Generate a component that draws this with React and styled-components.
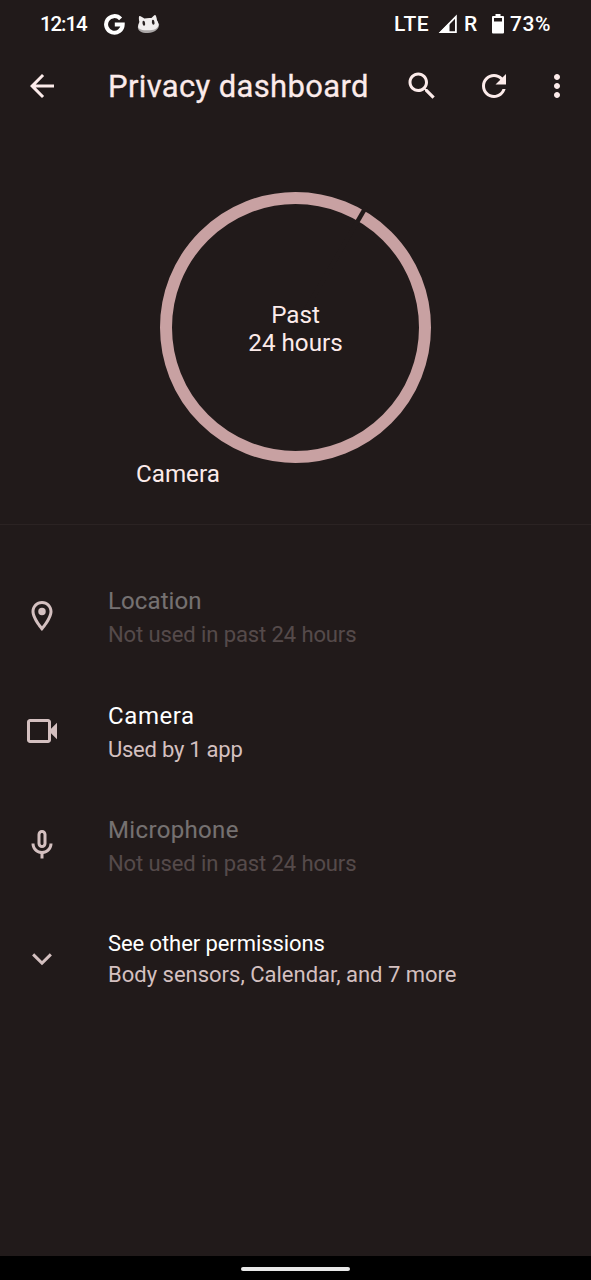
import styled, { createGlobalStyle } from "styled-components";

const colors = {
    background: "#211a1a",
    primaryText: "#fcebea",
    secondaryText: "#d4c0c0",
    ring: "#c8a1a2",
    divider: "#2b2323",
};

// The permission groups listed under the usage chart
const permissions = [
    { name: "Location", summary: "Not used in past 24 hours", icon: "location", used: false, spacing: "0.1px", summarySpacing: "-0.1px" },
    { name: "Camera", summary: "Used by 1 app", icon: "camera", used: true, spacing: "0.6px", summarySpacing: "-0.25px" },
    { name: "Microphone", summary: "Not used in past 24 hours", icon: "mic", used: false, spacing: "0.35px", summarySpacing: "-0.1px" },
];

const iconPaths = {
    back: "M20 11H7.83l5.59-5.59L12 4l-8 8 8 8 1.41-1.41L7.83 13H20v-2z",
    search: "M15.5 14h-.79l-.28-.27C15.41 12.59 16 11.11 16 9.5 16 5.91 13.09 3 9.5 3S3 5.91 3 9.5 5.91 16 9.5 16c1.61 0 3.09-.59 4.23-1.57l.27.28v.79l5 4.99L20.49 19l-4.99-5zm-6 0C7.01 14 5 11.99 5 9.5S7.01 5 9.5 5 14 7.01 14 9.5 11.99 14 9.5 14z",
    refresh: "M17.65 6.35C16.2 4.9 14.21 4 12 4c-4.42 0-7.99 3.58-7.99 8s3.57 8 7.99 8c3.73 0 6.84-2.55 7.73-6h-2.08c-.82 2.33-3.04 4-5.65 4-3.31 0-6-2.69-6-6s2.69-6 6-6c1.66 0 3.14.69 4.22 1.78L13 11h7V4l-2.35 2.35z",
    more: "M12 8c1.1 0 2-.9 2-2s-.9-2-2-2-2 .9-2 2 .9 2 2 2zm0 2c-1.1 0-2 .9-2 2s.9 2 2 2 2-.9 2-2-.9-2-2-2zm0 6c-1.1 0-2 .9-2 2s.9 2 2 2 2-.9 2-2-.9-2-2-2z",
    location: "M12 2C8.13 2 5 5.13 5 9c0 5.25 7 13 7 13s7-7.75 7-13c0-3.87-3.13-7-7-7zM7 9c0-2.76 2.24-5 5-5s5 2.24 5 5c0 2.88-2.88 7.19-5 9.88C9.92 16.21 7 11.85 7 9z M12 6.5a2.5 2.5 0 1 0 0 5 2.5 2.5 0 0 0 0-5z",
    camera: "M18 10.48V6c0-1.1-.9-2-2-2H4c-1.1 0-2 .9-2 2v12c0 1.1.9 2 2 2h12c1.1 0 2-.9 2-2v-4.48l4 3.98v-11l-4 3.98zM16 18H4V6h12v12z",
    mic: "M12 14c1.66 0 3-1.34 3-3V5c0-1.66-1.34-3-3-3S9 3.34 9 5v6c0 1.66 1.34 3 3 3zm-1-9c0-.55.45-1 1-1s1 .45 1 1v6c0 .55-.45 1-1 1s-1-.45-1-1V5zm6 6c0 2.76-2.24 5-5 5s-5-2.24-5-5H5c0 3.53 2.61 6.43 6 6.92V21h2v-3.08c3.39-.49 6-3.39 6-6.92h-2z",
    expand: "M17.2 8.2L12 13.4 6.8 8.2 5.4 9.6l6.6 6.6 6.6-6.6z",
};

const Icon = ({ name, size = 36 }) => (
    <svg width={size} height={size} viewBox="0 0 24 24" fill="currentColor">
        <path d={iconPaths[name]} />
    </svg>
);

const GoogleIcon = () => (
    <svg width="21" height="21" viewBox="0 0 21 21" fill="none" stroke="#fff" strokeWidth="4">
        <path d="M16.6 4.9A8.3 8.3 0 1 0 18.7 10.6H10.8" />
    </svg>
);

const CatIcon = () => (
    <svg width="23" height="20" viewBox="0 0 23 20">
        <path d="M.8 13C1 17.5 5 19.2 11 19s11.2-3.5 11-8.5L20 7 3 8z" fill="#a9a5a5" />
        <path d="M2.2 2.2C3 1.6 5.8 3.5 7.4 4.6c2-.6 5-.8 7-.5C16 2.8 17.4.8 18.2 1c1 .6 1.6 3.6 1.8 5.3 1.1 1.8 1.8 3.6 1.5 5C20.8 15 16.5 16.3 11 16.3S1.2 15.5 1.1 12.5c0-1.6.5-3 1.3-4.5C1.9 6 1.6 2.9 2.2 2.2z" fill="#f1eeee" />
        <ellipse cx="6.8" cy="9.3" rx="1.3" ry="2.5" fill="#292222" transform="rotate(-10 6.8 9.3)" />
        <ellipse cx="16.2" cy="8.3" rx="1.3" ry="2.5" fill="#292222" transform="rotate(-10 16.2 8.3)" />
    </svg>
);

const SignalIcon = () => (
    <svg width="20" height="20" viewBox="0 0 20 20">
        <path d="M2.8 18.1H17.9V2.7z" fill="none" stroke="#fff" strokeWidth="1.8" />
        <path d="M1 19L11.5 8.5V19z" fill="#fff" />
    </svg>
);

const BatteryIcon = () => (
    <svg width="12" height="20" viewBox="0 0 12 20">
        <path d="M3.5 0h5v2H11a1 1 0 0 1 1 1v15.5a1 1 0 0 1-1 1H1a1 1 0 0 1-1-1V3a1 1 0 0 1 1-1h2.5z" fill="#fff" />
        <path d="M2 4h8v3.5H2z" fill={colors.background} />
    </svg>
);

const UsageRing = () => (
    <svg width="271" height="271" viewBox="0 0 271 271">
        <circle cx="135.5" cy="135.5" r="129.5" fill="none" stroke={colors.ring} strokeWidth="12" />
        <path d="M135.5 135.5V-4" stroke={colors.background} strokeWidth="4.5" transform="rotate(30.3 135.5 135.5)" />
    </svg>
);

const PermissionRow = ({ permission }) => (
    <Row>
        <IconSlot><Icon name={permission.icon} /></IconSlot>
        <RowText>
            <RowTitle $used={permission.used} $spacing={permission.spacing}>{permission.name}</RowTitle>
            <RowSummary $used={permission.used} $spacing={permission.summarySpacing}>{permission.summary}</RowSummary>
        </RowText>
    </Row>
);

export default function App() {
    return (
        <Screen>
            <GlobalStyle />
            <StatusBar>
                <Clock>12:14</Clock>
                <Notifications>
                    <GoogleIcon />
                    <CatIcon />
                </Notifications>
                <StatusRight>
                    <Network>LTE</Network>
                    <SignalIcon />
                    <Roaming>R</Roaming>
                    <BatteryIcon />
                    <Percent>73%</Percent>
                </StatusRight>
            </StatusBar>
            <Toolbar>
                <ToolButton $width={36} aria-label="Back"><Icon name="back" /></ToolButton>
                <Title>Privacy dashboard</Title>
                <ToolButton $width={72} aria-label="Search"><Icon name="search" /></ToolButton>
                <ToolButton $width={72} aria-label="Refresh"><Icon name="refresh" /></ToolButton>
                <ToolButton $width={54} aria-label="More options"><Icon name="more" /></ToolButton>
            </Toolbar>
            <Chart>
                <RingArea>
                    <UsageRing />
                    <RingCaption>
                        <span>Past</span>
                        <span>24 hours</span>
                    </RingCaption>
                </RingArea>
                <ChartLabel>Camera</ChartLabel>
            </Chart>
            <List>
                {permissions.map((permission) => (
                    <PermissionRow key={permission.name} permission={permission} />
                ))}
                <ExpandRow>
                    <IconSlot><Icon name="expand" /></IconSlot>
                    <ExpandText>
                        <ExpandTitle $used $spacing="-0.08px">See other permissions</ExpandTitle>
                        <ExpandSummary $used>Body sensors, Calendar, and 7 more</ExpandSummary>
                    </ExpandText>
                </ExpandRow>
            </List>
            <NavigationBar>
                <NavigationHandle />
            </NavigationBar>
        </Screen>
    );
}

const GlobalStyle = createGlobalStyle`
    * {
        box-sizing: border-box;
    }
    body {
        margin: 0;
        background: ${colors.background};
    }
    svg {
        display: block;
        flex: none;
    }
`;

const Screen = styled.div`
    display: flex;
    flex-direction: column;
    width: 591px;
    height: 1280px;
    overflow: hidden;
    background: ${colors.background};
    color: ${colors.primaryText};
    font-family: Roboto, "Liberation Sans", sans-serif;
    white-space: nowrap;
`;

const StatusBar = styled.div`
    display: flex;
    align-items: center;
    height: 48px;
    padding: 0 40px;
    color: #fff;
    font-size: 21px;
    font-weight: 500;
`;

const Clock = styled.span`
    width: 64px;
    font-size: 20.5px;
    letter-spacing: -1.1px;
`;

const Notifications = styled.div`
    display: flex;
    align-items: center;
    gap: 12px;
`;

const StatusRight = styled.div`
    display: flex;
    align-items: center;
    margin-left: auto;
`;

const Network = styled.span`
    width: 44px;
    letter-spacing: 0.6px;
`;

const Roaming = styled.span`
    width: 34px;
    padding-left: 6px;
`;

const Percent = styled.span`
    width: 41px;
    margin-left: 6px;
    letter-spacing: 0.6px;
`;

const Toolbar = styled.header`
    display: flex;
    align-items: center;
    height: 76px;
    padding-left: 24px;
`;

const ToolButton = styled.button`
    display: flex;
    flex: none;
    align-items: center;
    justify-content: center;
    width: ${({ $width }) => $width}px;
    height: 48px;
    padding: 0;
    border: 0;
    background: none;
    color: inherit;
`;

const Title = styled.h1`
    width: 278px;
    margin: 0 0 0 48px;
    font-size: 31px;
    font-weight: 400;
    letter-spacing: 0.35px;
    -webkit-text-stroke: 0.3px;
`;

const Chart = styled.section`
    flex: none;
    height: 401px;
    padding-top: 68px;
    border-bottom: 1px solid ${colors.divider};
    font-size: 24.2px;
    line-height: 28px;
`;

const RingArea = styled.div`
    display: grid;
    place-items: center;
    width: 271px;
    height: 271px;
    margin: 0 auto;
    > * {
        grid-area: 1 / 1;
    }
`;

const RingCaption = styled.div`
    display: flex;
    flex-direction: column;
    align-items: center;
    padding-top: 3px;
`;

const ChartLabel = styled.div`
    margin: -3px 0 0 136px;
`;

const List = styled.ul`
    flex: 1;
    margin: 0;
    padding: 34px 0 0;
`;

const Row = styled.li`
    display: flex;
    align-items: center;
    height: 114.4px;
    padding-left: 24px;
`;

const ExpandRow = styled(Row)`
    height: 113px;
`;

const IconSlot = styled.div`
    width: 84px;
    color: ${colors.secondaryText};
`;

const RowText = styled.div`
    display: flex;
    flex-direction: column;
    padding-top: 4px;
`;

const ExpandText = styled(RowText)`
    padding-top: 0;
`;

const RowTitle = styled.span`
    color: #fff;
    font-size: 24px;
    line-height: 33px;
    letter-spacing: ${({ $spacing }) => $spacing};
    opacity: ${({ $used }) => ($used ? 1 : 0.38)};
`;

const RowSummary = styled.span`
    color: ${colors.secondaryText};
    font-size: 22px;
    line-height: 33px;
    letter-spacing: ${({ $spacing }) => $spacing};
    opacity: ${({ $used }) => ($used ? 1 : 0.29)};
`;

const ExpandTitle = styled(RowSummary)`
    color: #fff;
    line-height: 31px;
`;

const ExpandSummary = styled(RowSummary)`
    line-height: 31px;
`;

const NavigationBar = styled.footer`
    display: flex;
    flex: none;
    align-items: center;
    justify-content: center;
    height: 24px;
    padding-top: 2px;
    background: #000;
`;

const NavigationHandle = styled.div`
    width: 109px;
    height: 4px;
    border-radius: 2px;
    background: #e8e8e8;
`;
